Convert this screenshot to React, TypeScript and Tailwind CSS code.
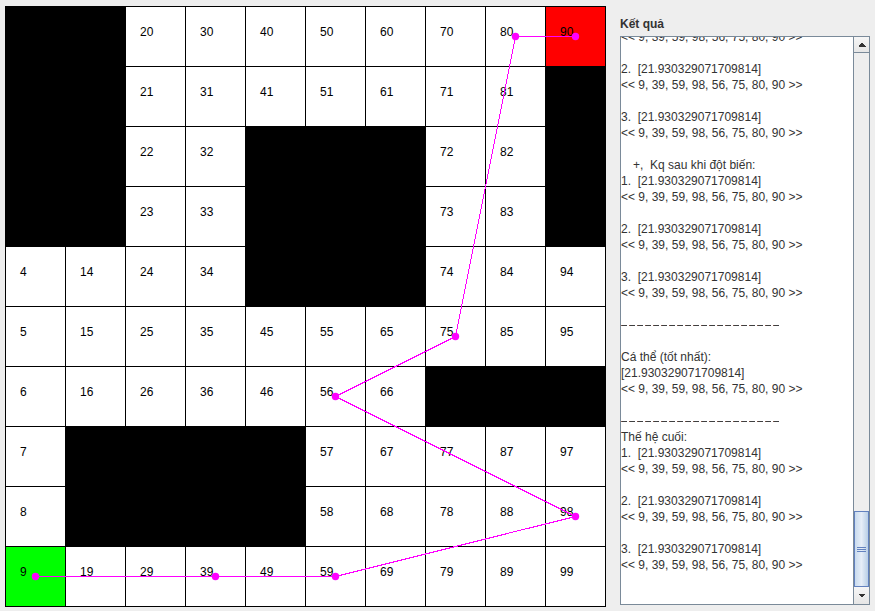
import React from "react";

const BLACK: Record<number, number[]> = {
  0: [0, 1, 2, 3],
  1: [0, 1, 2, 3, 7, 8],
  2: [7, 8],
  3: [7, 8],
  4: [2, 3, 4, 7, 8],
  5: [2, 3, 4],
  6: [2, 3, 4],
  7: [6],
  8: [6],
  9: [1, 2, 3, 6],
};

const PATH = [
  [0, 9],
  [3, 9],
  [5, 9],
  [9, 8],
  [5, 6],
  [7, 5],
  [8, 0],
  [9, 0],
];

const SEQ = "<< 9, 39, 59, 98, 56, 75, 80, 90 >>";
const VAL = "[21.930329071709814]";

type Line = { t: string; kind?: "indent" | "dash" };

const LINES: Line[] = [
  { t: SEQ },
  { t: "" },
  { t: "2.  " + VAL },
  { t: SEQ },
  { t: "" },
  { t: "3.  " + VAL },
  { t: SEQ },
  { t: "" },
  { t: "+,  Kq sau khi đột biến:", kind: "indent" },
  { t: "1.  " + VAL },
  { t: SEQ },
  { t: "" },
  { t: "2.  " + VAL },
  { t: SEQ },
  { t: "" },
  { t: "3.  " + VAL },
  { t: SEQ },
  { t: "" },
  { t: "", kind: "dash" },
  { t: "" },
  { t: "Cá thể (tốt nhất):" },
  { t: VAL },
  { t: SEQ },
  { t: "" },
  { t: "", kind: "dash" },
  { t: "Thế hệ cuối:" },
  { t: "1.  " + VAL },
  { t: SEQ },
  { t: "" },
  { t: "2.  " + VAL },
  { t: SEQ },
  { t: "" },
  { t: "3.  " + VAL },
  { t: SEQ },
  { t: "" },
  { t: "" },
];

function Cell({ c, r }: { c: number; r: number }) {
  const isBlack = BLACK[c].includes(r);
  const isRed = c === 9 && r === 0;
  const isGreen = c === 0 && r === 9;
  const bg = isBlack
    ? "bg-black"
    : isRed
    ? "bg-[#ff0000]"
    : isGreen
    ? "bg-[#00ff00]"
    : "bg-white";
  return (
    <div
      className={`w-[60px] h-[60px] border-r border-b border-black ${bg} pl-[14px] pt-[18px] text-[12px] leading-[14px] text-black`}
    >
      {!isBlack && <span>{c * 10 + r}</span>}
    </div>
  );
}

function Dashes() {
  return (
    <div className="flex h-[16px]">
      {Array.from({ length: 20 }).map((_, i) => (
        <span key={i} className="inline-block w-[6px] mr-[2px] overflow-hidden">
          –
        </span>
      ))}
    </div>
  );
}

export default function App() {
  const cells = [];
  for (let r = 0; r < 10; r++) {
    for (let c = 0; c < 10; c++) {
      cells.push(<Cell key={`${c}-${r}`} c={c} r={r} />);
    }
  }
  const pts = PATH.map(([c, r]) => [30.5 + 60 * c, 30.5 + 60 * r]);
  return (
    <div className="w-[875px] h-[611px] bg-[#eeeeee] flex font-['Liberation_Sans',Arial,sans-serif] overflow-hidden">
      <div className="ml-[5px] mt-[6px] relative self-start">
        <div className="grid grid-cols-10 border-l border-t border-black w-[601px]">
          {cells}
        </div>
        <svg
          className="absolute left-0 top-0 pointer-events-none"
          width={601}
          height={601}
          viewBox="0 0 601 601"
        >
          <polyline
            points={pts.map((p) => p.join(",")).join(" ")}
            fill="none"
            stroke="#ff00ff"
            strokeWidth={1}
            shapeRendering="crispEdges"
          />
          {pts.map((p, i) => (
            <circle key={i} cx={p[0]} cy={p[1]} r={3.7} fill="#ff00ff" />
          ))}
        </svg>
      </div>

      <div className="ml-[14px] pt-[16px] flex flex-col">
        <div className="h-[16px] leading-[16px] text-[12px] font-bold text-[#333333]">
          Kết quả
        </div>
        <div className="mt-[4px] w-[250px] h-[569px] border border-[#7a8a99] flex">
          <div className="w-[232px] h-full bg-white overflow-hidden">
            <div className="mt-[-8px] text-[12px] leading-[16px] text-[#333333] whitespace-pre">
              {LINES.map((l, i) =>
                l.kind === "dash" ? (
                  <Dashes key={i} />
                ) : (
                  <div
                    key={i}
                    className={`h-[16px] ${l.kind === "indent" ? "pl-[12px]" : ""}`}
                  >
                    {l.t}
                  </div>
                )
              )}
            </div>
          </div>
          <div className="w-[16px] h-full border-l border-[#7a8a99] flex flex-col bg-[#eeeeee]">
            <div className="h-[16px] border-b border-[#7a8a99] bg-gradient-to-b from-[#f6f6f6] to-[#e6e6e6] flex items-center justify-center">
              <svg width="8" height="5" viewBox="0 0 8 5">
                <polygon points="0.5,4.5 7.5,4.5 4,0.5" fill="#333333" shapeRendering="crispEdges" />
              </svg>
            </div>
            <div className="h-[458px] bg-[#eeeeee]" />
            <div className="h-[76px] border border-[#6382bf] bg-gradient-to-r from-[#c9dbee] via-[#e6eef8] to-[#b9cfe6] flex flex-col items-center justify-center gap-[1px]">
              <div className="w-[9px] h-[1px] bg-[#6382bf]" />
              <div className="w-[9px] h-[1px] bg-[#6382bf]" />
              <div className="w-[9px] h-[1px] bg-[#6382bf]" />
            </div>
            <div className="h-[17px] bg-gradient-to-b from-[#f6f6f6] to-[#e6e6e6] flex items-center justify-center">
              <svg width="8" height="5" viewBox="0 0 8 5">
                <polygon points="0.5,0.5 7.5,0.5 4,4.5" fill="#333333" shapeRendering="crispEdges" />
              </svg>
            </div>
          </div>
        </div>
      </div>
    </div>
  );
}
